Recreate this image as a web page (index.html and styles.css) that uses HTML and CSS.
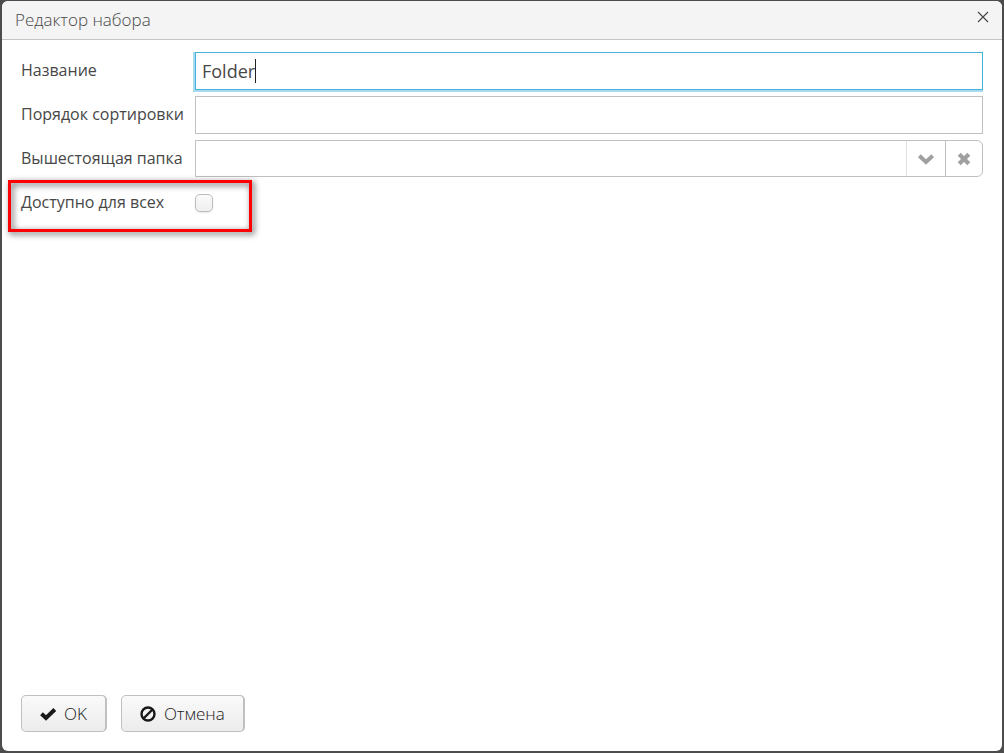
FILE: index.html
```
<!DOCTYPE html>
<html lang="ru">
<head>
    <meta charset="UTF-8">
    <meta name="viewport" content="width=device-width, initial-scale=1.0">
    <title>Редактор набора</title>
    <link rel="stylesheet" href="styles.css">
</head>

<body>
    <form class="window">
        <header class="window-header">
            <h1>Редактор набора</h1>
            <button type="button" class="close-btn" aria-label="Закрыть">
                <svg width="12" height="12" viewBox="0 0 12 12"><path d="M1 1L11 11M11 1L1 11" stroke="#444" stroke-width="1.1" fill="none"/></svg>
            </button>
        </header>

        <div class="form-container">
            <div class="form-row">
                <label for="name">Название</label>
                <div class="field">
                    <input type="text" id="name" class="text-field" value="Folder" autofocus>
                    <span class="caret"></span>
                </div>
            </div>
            <div class="form-row">
                <label for="sortOrder">Порядок сортировки</label>
                <input type="text" id="sortOrder" class="text-field">
            </div>
            <div class="form-row">
                <label for="parentFolder">Вышестоящая папка</label>
                <div class="picker">
                    <input type="text" id="parentFolder">
                    <button type="button" class="open-btn" aria-label="Выбрать">
                        <svg width="18" height="12" viewBox="0 0 18 12"><path d="M2.3 2.8L9 9L15.7 2.8" stroke="#a0a0a0" stroke-width="4" fill="none"/></svg>
                    </button>
                    <button type="button" class="clear-btn" aria-label="Очистить">
                        <svg width="14" height="14" viewBox="0 0 14 14"><path d="M2.2 2.2L11.8 11.8M11.8 2.2L2.2 11.8" stroke="#a0a0a0" stroke-width="4.200" fill="none"/></svg>
                    </button>
                </div>
            </div>
            <div class="form-row highlighted">
                <label for="forAll">Доступно для всех</label>
                <input type="checkbox" id="forAll" class="check">
            </div>
        </div>

        <footer class="toolbar">
            <button type="button" class="btn">
                <svg width="18" height="14" viewBox="0 0 18 14"><path d="M2.5 6.8L7 11L15.8 2.5" stroke="#191919" stroke-width="4" fill="none"/></svg>
                OK
            </button>
            <button type="button" class="btn">
                <svg width="18" height="16" viewBox="0 0 18 16"><circle cx="9" cy="8" r="6.5" stroke="#191919" stroke-width="2.4" fill="none"/><path d="M4.5 12.5L13.5 3.5" stroke="#191919" stroke-width="2.4"/></svg>
                Отмена
            </button>
        </footer>
    </form>
</body>
</html>
```

FILE: styles.css
```
*, *::after {
    box-sizing: border-box;
}

body {
    margin: 0;
    padding: 1px 2px 2px;
    height: 100vh;
    background-color: #4c4c4c;
    color: #474747;
    font-family: "Open Sans", sans-serif;
    font-size: 16px;
}

button, input {
    margin: 0;
    font-family: inherit;
    color: inherit;
}

svg {
    display: block;
}

.window {
    display: flex;
    flex-direction: column;
    height: 100%;
    background-color: #fff;
    border-radius: 6px;
    overflow: hidden;
}

.window-header {
    display: flex;
    justify-content: space-between;
    align-items: flex-start;
    height: 39px;
    padding: 0 13px;
    background-color: #f4f4f4;
    border-bottom: 1px solid #c4c4c4;
}

.window-header h1 {
    margin: 0;
    font-size: 17px;
    font-weight: 300;
    line-height: 37px;
}

.close-btn {
    padding: 10px 0;
    background: none;
    border: none;
    cursor: pointer;
}

.form-container {
    flex: 1;
    display: flex;
    flex-direction: column;
    gap: 6px;
    padding: 12px 19px;
}

.form-row {
    display: grid;
    grid-template-columns: 174px 1fr;
    align-items: start;
    min-height: 38px;
}

.form-row label {
    line-height: 36px;
}

.field {
    position: relative;
}

.text-field {
    display: block;
    width: 100%;
    height: 38px;
    padding: 0 6px;
    background-color: #fff;
    border: 1px solid #c0c0c0;
    border-radius: 0;
    font-size: 18px;
    caret-color: transparent;
}

.text-field:focus {
    outline: none;
    border-color: #46b2dc;
    box-shadow: -2px 0 #a6dbef, -2px 2px #a6dbef, 0 2px #a6dbef;
}

.caret {
    display: none;
    position: absolute;
    top: 7px;
    left: 60px;
    width: 1px;
    height: 24px;
    background-color: #222;
}

.text-field:focus + .caret {
    display: block;
}

.picker {
    display: flex;
    height: 37px;
    border: 1px solid #c0c0c0;
    border-radius: 0 6px 6px 0;
}

.picker input {
    flex: 1;
    min-width: 0;
    padding: 0 6px;
    background: none;
    border: none;
    outline: none;
    font-size: 18px;
}

.picker button {
    display: flex;
    justify-content: center;
    align-items: center;
    padding: 0;
    background: none;
    border: none;
    cursor: pointer;
}

.picker .open-btn {
    width: 39px;
    border-left: 1px solid #e0e0e0;
}

.picker .clear-btn {
    width: 37px;
    border-left: 1px solid #c0c0c0;
}

.check {
    appearance: none;
    width: 18px;
    height: 18px;
    margin-top: 10px;
    background: linear-gradient(#fafafa, #efefef);
    border: 1px solid #bdbdbd;
    border-radius: 5px;
    box-shadow: 0 1px 2px rgba(0, 0, 0, 0.1);
}

.check:checked {
    background: #46b2dc;
}

.highlighted {
    position: relative;
}

/* red frame around the row */
.highlighted::after {
    content: "";
    position: absolute;
    top: -4px;
    left: -13px;
    width: 244px;
    height: 52px;
    border: 3px solid #f00;
    filter: drop-shadow(2px 2px 3px rgba(0, 0, 0, 0.7));
    pointer-events: none;
}

.toolbar {
    display: flex;
    gap: 14px;
    padding: 19px;
}

.btn {
    display: flex;
    align-items: center;
    gap: 7px;
    height: 37px;
    padding: 0 18px 0 17px;
    background: linear-gradient(#fafafa, #ececec);
    border: 1px solid #c0c0c0;
    border-right-width: 2px;
    border-radius: 5px;
    color: #191919;
    font-size: 17px;
    font-weight: 300;
    cursor: pointer;
}

.btn:hover {
    background: #f4f4f4;
}
```
